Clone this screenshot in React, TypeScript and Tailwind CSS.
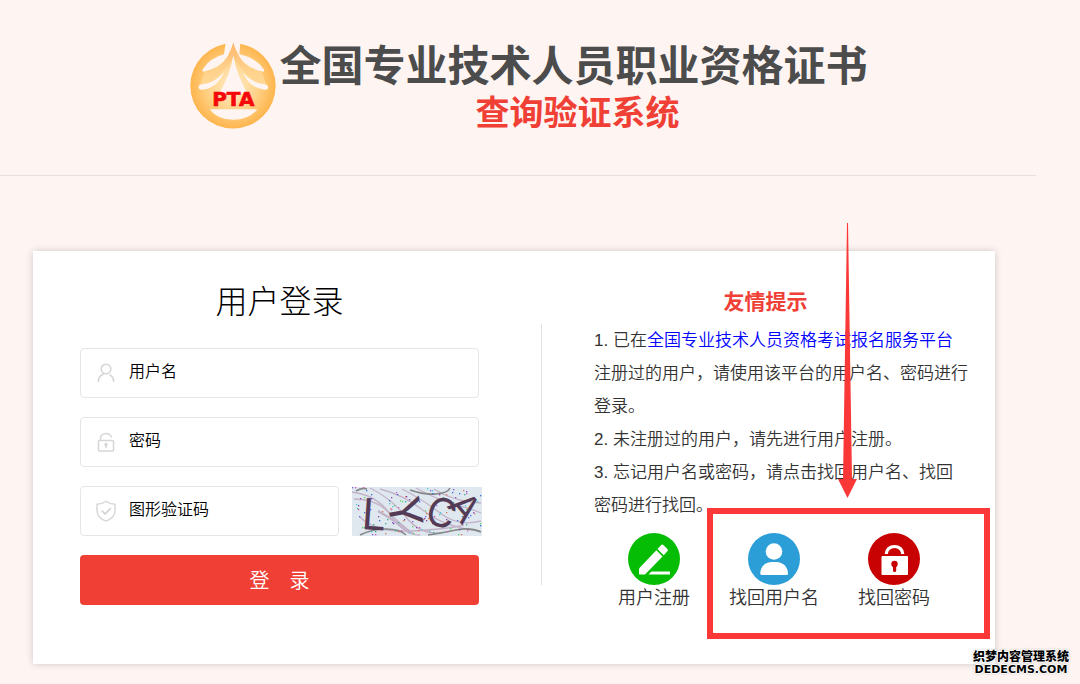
import type { ReactNode } from 'react'

const Logo: React.FC = () => (
  <svg viewBox="18 14 258 260" className="h-[87px] w-[86px] shrink-0">
    <defs>
      <radialGradient id="ring" cx="50%" cy="50%" r="50%">
        <stop offset="0%" stopColor="#ffecc9" />
        <stop offset="55%" stopColor="#ffd48c" />
        <stop offset="100%" stopColor="#fdb54d" />
      </radialGradient>
      <linearGradient id="roof" x1="0" y1="0" x2="0" y2="1">
        <stop offset="0%" stopColor="#ffb56c" />
        <stop offset="60%" stopColor="#ffd08a" />
        <stop offset="100%" stopColor="#ffd894" />
      </linearGradient>
    </defs>
    <circle cx="147" cy="145" r="128" fill="url(#ring)" />
    <path d="M126 8 H170 L166 50 Q216 60 240 96 Q242 104 234 102 Q188 92 166 58 L148 20 L130 58 Q108 92 62 102 Q54 104 56 96 Q78 60 120 50 Z" fill="#fef5f2" />
    <path d="M148 14 Q138 62 104 88 Q86 102 62 102 L50 141 Q98 134 148 60 Q198 134 246 141 L234 102 Q210 102 192 88 Q158 62 148 14 Z" fill="url(#roof)" />
    <path d="M120 104 Q94 136 50 141 Q42 144 44 152 Q48 159 58 156 Q100 150 120 104 Z" fill="#fef5f2" />
    <path d="M176 104 Q202 136 246 141 Q254 144 252 152 Q248 159 238 156 Q196 150 176 104 Z" fill="#fef5f2" />
    <path d="M148 54 Q137 114 106 168 H190 Q159 114 148 54 Z" fill="#fef5f2" />
    <path d="M77 215 L220 215 Q196 246 148 247 Q100 246 77 215 Z" fill="#fef5f2" />
    <text
      x="148"
      y="206"
      textAnchor="middle"
      fontSize="60"
      fontWeight="700"
      fontFamily="DejaVu Sans, sans-serif"
      fill="#f5080c"
      stroke="#f5080c"
      strokeWidth="2"
    >
      PTA
    </text>
  </svg>
)

const UserIcon: React.FC = () => (
  <svg viewBox="0 0 20 22" fill="none" stroke="#d6d6d6" strokeWidth="1.6" strokeLinecap="round" className="h-[22px] w-5">
    <circle cx="10" cy="7" r="4.8" />
    <path d="M2.3 19.5c0-3.6 2-6.3 5.2-7.6M14 13c2.2 1.3 3.6 3.6 3.7 6.4" />
  </svg>
)

const LockIcon: React.FC = () => (
  <svg viewBox="0 0 20 22" fill="none" stroke="#d6d6d6" strokeWidth="1.5" strokeLinecap="round" className="h-[22px] w-5">
    <rect x="2.5" y="9.5" width="15" height="10.5" rx="1" />
    <path d="M4.5 9V7.500c0-3 2.400-5 5.500-5 2.500 0 4.600 1.200 5.300 3.300" />
    <circle cx="10" cy="13.5" r="1" fill="#d6d6d6" />
    <path d="M10 14v2.8" />
  </svg>
)

const ShieldIcon: React.FC = () => (
  <svg viewBox="0 0 20 22" fill="none" stroke="#d6d6d6" strokeWidth="1.4" strokeLinejoin="round" className="h-[22px] w-5">
    <path d="M10 1.200c2.600 1.900 5.500 2.900 9 3v6.300c0 5-3.500 8.600-9 10.500-5.500-1.900-9-5.500-9-10.500V4.200c3.500-.1 6.400-1.100 9-3z" />
    <path d="M5.800 10.600l3.300 3.400 5.700-5.800" strokeWidth="1.8" />
  </svg>
)

const speckColors = ['#7b5be0', '#35b58a', '#d65fc0', '#3d6fd8', '#64d36b', '#e07b5b', '#8a3fa8', '#4dc8d8']

const specks = Array.from({ length: 120 }, (_, i) => ({
  x: (i * 47 + ((i * i) % 13) * 5) % 129,
  y: (i * 29 + ((i * i) % 7) * 3) % 48,
  color: speckColors[(i * 5 + (i % 3)) % speckColors.length],
}))

const Captcha: React.FC = () => (
  <svg viewBox="0 0 130 49" className="block h-[49px] w-[130px] overflow-visible">
    <rect width="130" height="49" fill="#dfe7ef" />
    <g fill="none" stroke="#c3b3c9" strokeWidth="1.3">
      <path d="M0 5Q22 8 34 22T62 47" />
      <path d="M2 12Q28 12 40 30T68 48" />
      <path d="M18 1Q40 12 54 30T90 46" />
      <path d="M28 2Q52 8 72 24T128 44" />
      <path d="M50 2Q70 12 88 26T129 34" />
      <path d="M64 1Q88 14 104 18T129 26" />
      <path d="M82 2Q100 14 129 16" />
      <path d="M8 30Q24 46 60 44T112 38" />
      <path d="M26 24Q44 34 58 46" strokeWidth="2.5" />
    </g>
    <g fill="none" stroke="#858888" strokeWidth="1.6">
      <path d="M4 4Q10 0 15 2M8 48Q20 42 34 42T54 48" />
      <path d="M58 3Q72 8 84 7T98 1M76 48Q90 46 104 43T129 45" />
    </g>
    {specks.map((s, i) => (
      <rect key={i} x={s.x} y={s.y} width="1.3" height="1.3" fill={s.color} />
    ))}
    <g fill="#543b56" fontFamily="Inter, sans-serif">
      <text x="9" y="42" fontSize="43" transform="rotate(4 9 42)">L</text>
      <text x="35" y="13" fontSize="44" transform="rotate(80 35 13)">Y</text>
      <text x="71" y="34" fontSize="40" transform="rotate(20 71 34)">C</text>
      <text x="94" y="19" fontSize="38" transform="rotate(50 94 19)">A</text>
    </g>
  </svg>
)

type FieldProps = {
  id: string
  text: string
  type?: string
  icon: ReactNode
}

const Field: React.FC<FieldProps> = ({ id, text, type = 'text', icon }) => (
  <div className="flex h-[50px] min-w-0 flex-1 items-center gap-[13px] rounded-sm border border-[#e6e6e6] bg-white pl-[15px]">
    <label htmlFor={id} aria-label={text} className="shrink-0">
      {icon}
    </label>
    <input
      id={id}
      type={type}
      placeholder={text}
      className="h-full w-full min-w-0 pb-[2px] text-base font-[350] text-black outline-none placeholder:text-black"
    />
  </div>
)

const PencilBadge: React.FC = () => (
  <svg viewBox="0 0 52 52" className="size-[52px]">
    <circle cx="26" cy="26" r="26" fill="#05bd05" />
    <g fill="#fff">
      <path d="M11 35.500L28.300 17.300l6.200 6.200L17 41.500h-5.200a.8.800 0 0 1-.8-.8z" />
      <path d="M29.500 16l3.700-4a1.500 1.500 0 0 1 2.200 0l4 4a1.500 1.500 0 0 1 0 2.200l-3.700 4z" />
      <path d="M23.500 38.500H42v3H20.500z" />
    </g>
  </svg>
)

const PersonBadge: React.FC = () => (
  <svg viewBox="0 0 52 52" className="size-[52px]">
    <circle cx="26" cy="26" r="26" fill="#2b9ed8" />
    <circle cx="26" cy="18.5" r="8.3" fill="#fff" />
    <path d="M12.300 40.500c0-6.500 5-11.500 11-11.500h5.400c6 0 11.300 5 11.300 11.500q0 1.500-1.500 1.500H13.800q-1.500 0-1.500-1.500z" fill="#fff" />
  </svg>
)

const LockBadge: React.FC = () => (
  <svg viewBox="0 0 52 52" className="size-[52px]">
    <circle cx="26" cy="26" r="26" fill="#c80202" />
    <path d="M18.300 21c0-4.500 3.700-7.500 8.200-7.500s8.200 3 8.200 7.500" fill="none" stroke="#fff" strokeWidth="3.2" />
    <rect x="13.5" y="23" width="26.5" height="19" rx="1" fill="#fff" />
    <circle cx="26.5" cy="31" r="3.2" fill="#c80202" />
    <path d="M25 32h3.200v5.500a1.600 1.600 0 0 1-3.200 0z" fill="#c80202" />
  </svg>
)

const shortcuts = [
  { text: '用户注册', icon: <PencilBadge /> },
  { text: '找回用户名', icon: <PersonBadge /> },
  { text: '找回密码', icon: <LockBadge /> },
]

const LoginForm: React.FC = () => (
  <form className="flex flex-col pt-[31px] pr-[62px] pb-[59px] pl-[47px]">
    <h2 className="text-center text-[32px] leading-10 font-light text-black">用户登录</h2>
    <div className="mt-[26px] flex flex-col gap-[19px]">
      <div className="flex">
        <Field id="username" text="用户名" icon={<UserIcon />} />
      </div>
      <div className="flex">
        <Field id="password" text="密码" type="password" icon={<LockIcon />} />
      </div>
      <div className="-mr-[3px] flex items-center gap-[13px]">
        <Field id="captcha" text="图形验证码" icon={<ShieldIcon />} />
        <button type="button" aria-label="图形验证码">
          <Captcha />
        </button>
      </div>
      <button type="submit" className="h-[50px] rounded-sm bg-[#f04035] pt-[2px] text-xl font-[350] whitespace-pre text-white">
        登&#12288;录
      </button>
    </div>
  </form>
)

const Tips: React.FC = () => (
  <div className="relative pt-[31px] pr-[26px] pl-[52px]">
    <h3 className="pr-8 text-center text-[21px] leading-10 font-bold text-[#f04035]">友情提示</h3>
    <div className="mt-[2px] text-[17px] leading-[33px] font-[350] text-[#333]">
      <p>
        1. 已在
        <a href="#" className="text-[#0000ff]">
          全国专业技术人员资格考试报名服务平台
        </a>
        注册过的用户，请使用该平台的用户名、密码进行登录。
      </p>
      <p>2. 未注册过的用户，请先进行用户注册。</p>
      <p>3. 忘记用户名或密码，请点击找回用户名、找回密码进行找回。</p>
    </div>
    <div className="mt-[11px] flex">
      {shortcuts.map((item) => (
        <a key={item.text} href="#" className="flex w-[120px] flex-col items-center text-lg leading-[26px] font-[350] text-[#333]">
          {item.icon}
          {item.text}
        </a>
      ))}
    </div>
    <div className="pointer-events-none absolute top-[257px] right-[5px] h-[131px] w-[283px] border-6 border-[#fb3838]" />
    <svg viewBox="0 0 20 275" className="pointer-events-none absolute -top-7 right-[138px] h-[275px] w-5">
      <path d="M10 0h1l4 256h5L10.500 275 1 256h5z" fill="#fb3838" />
    </svg>
  </div>
)

const App: React.FC = () => {
  return (
    <div className="relative min-h-screen bg-[#fef5f2] pr-11 font-['Liberation_Sans','Noto_Sans_CJK_SC',sans-serif]">
      <header className="flex justify-center gap-[3px] border-b border-[#e6dfdc] pt-[42px] pb-[45px] pl-[22px]">
        <Logo />
        <h1 className="pt-1 text-center font-bold whitespace-nowrap">
          <span className="block text-[42px] leading-[42px] text-[#4c4c4c]">全国专业技术人员职业资格证书</span>
          <span className="mt-2 block pl-2 text-[34px] leading-[34px] text-[#f04035]">查询验证系统</span>
        </h1>
      </header>
      <main className="pt-[75px] pr-[41px] pb-5 pl-[33px]">
        <div className="grid grid-cols-[508fr_1px_453fr] bg-white shadow-[0_0_7px_#cfc8c5]">
          <LoginForm />
          <div className="mt-[73px] mb-[79px] bg-[#e2e2e2]" />
          <Tips />
        </div>
      </main>
      <div className="absolute right-[11px] bottom-2 text-center font-black text-black [text-shadow:1px_0_#fff,-1px_0_#fff,0_1px_#fff,0_-1px_#fff,0_0_3px_#888]">
        <p className="text-xs leading-[14px]">织梦内容管理系统</p>
        <p className="font-['DejaVu_Sans',sans-serif] text-[11px] leading-3">DEDECMS.COM</p>
      </div>
    </div>
  )
}

export default App
